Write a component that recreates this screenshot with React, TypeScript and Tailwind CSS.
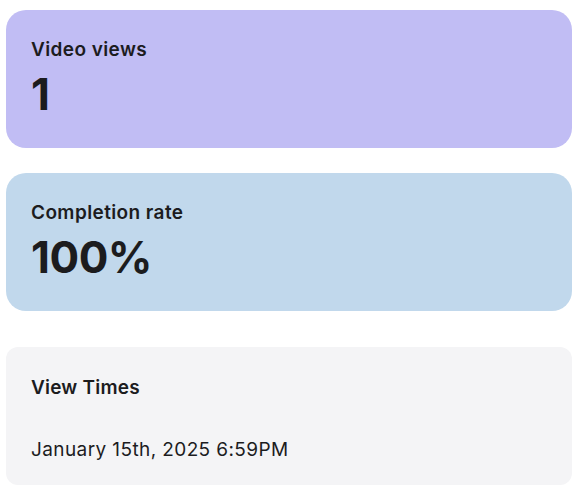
const stats = [
  { label: 'Video views', value: '1', bg: 'bg-[#c1bdf4]' },
  { label: 'Completion rate', value: '100%', bg: 'bg-[#c1d8ec]' },
];

export default function App() {
  return (
    <div className="min-h-screen bg-white pl-[6px] pr-[8px] pt-[10px] text-[#1c1c1e] font-['Inter',sans-serif]">
      <div className="flex flex-col gap-[25px]">
        {stats.map((s) => (
          <div key={s.label} className={`h-[138px] rounded-[20px] px-[25px] pt-[28px] ${s.bg}`}>
            <div className="text-[19px] leading-[24px] font-semibold tracking-[0.4px]">{s.label}</div>
            <div className="mt-[10px] text-[44px] leading-none font-bold tracking-[-0.5px]">{s.value}</div>
          </div>
        ))}
      </div>
      <div className="mt-[36px] h-[138px] rounded-[12px] bg-[#f4f4f6] px-[25px] pt-[29px]">
        <div className="text-[19px] leading-[24px] font-semibold tracking-[0.2px]">View Times</div>
        <div className="mt-[38px] text-[19px] leading-[24px] tracking-[0.4px]">January 15th, 2025 6:59PM</div>
      </div>
    </div>
  );
}
